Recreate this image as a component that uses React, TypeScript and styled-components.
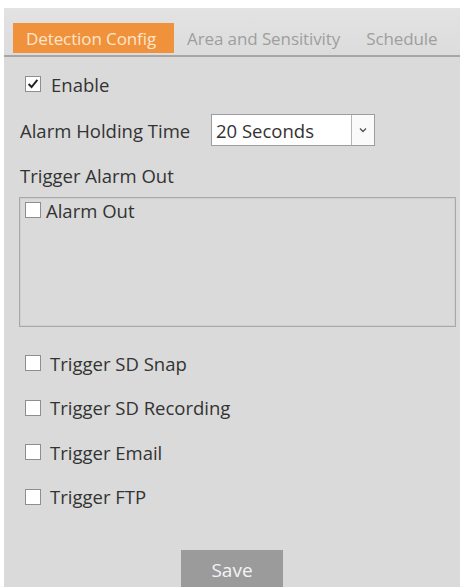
import React from "react";
import styled, { createGlobalStyle } from "styled-components";

const Global = createGlobalStyle`
  html, body { margin: 0; padding: 0; background: #ffffff; }
  body { font-family: "Open Sans", "Noto Sans", "Liberation Sans", sans-serif; color: #333333; }
  #root { width: 473px; height: 587px; overflow: hidden; }
`;

const Panel = styled.div`
  margin: 8px 0 0 4px;
  width: 456px;
  height: 600px;
  background: #dadada;
  box-sizing: border-box;
  display: flex;
  flex-direction: column;
`;

const TabBar = styled.div`
  display: flex;
  align-items: stretch;
  padding: 15px 0 0 9px;
  height: 47px;
  box-sizing: content-box;
  height: 32px;
  border-bottom: 2px solid #a6a6a6;
  background: linear-gradient(#e3e3e3, #dcdcdc);
`;

const Tab = styled.div<{ $active?: boolean }>`
  display: flex;
  align-items: center;
  padding: 0 13px;
  font-size: 17px;
  letter-spacing: -0.1px;
  white-space: nowrap;
  background: ${(p) => (p.$active ? "#f0913c" : "transparent")};
  color: ${(p) => (p.$active ? "#fde6cc" : "#9e9e9e")};
  width: ${(p) => (p.$active ? "161px" : "auto")};
  box-sizing: border-box;
  margin-bottom: 2px;
`;

const Content = styled.div`
  display: flex;
  flex-direction: column;
  padding: 0 4px 0 15px;
`;

const Row = styled.div<{ $mt: number; $h: number; $indent?: number }>`
  display: flex;
  align-items: center;
  margin-top: ${(p) => p.$mt}px;
  height: ${(p) => p.$h}px;
  padding-left: ${(p) => p.$indent ?? 0}px;
  font-size: 18.5px;
  color: #333333;
  white-space: nowrap;
`;

const Box = styled.span`
  width: 16px;
  height: 16px;
  box-sizing: border-box;
  border: 1px solid #8e8e8e;
  background: #ffffff;
  display: inline-flex;
  align-items: center;
  justify-content: center;
  flex: none;
`;

const CheckLabel = styled.span<{ $gap: number }>`
  margin-left: ${(p) => p.$gap}px;
`;

const FieldLabel = styled.span`
  width: 191px;
  flex: none;
`;

const Select = styled.div`
  width: 164px;
  height: 32px;
  box-sizing: border-box;
  border: 1px solid #9d9d9d;
  background: #ffffff;
  display: flex;
  align-items: stretch;
`;

const SelectText = styled.span`
  flex: 1;
  display: flex;
  align-items: center;
  padding-left: 4px;
  font-size: 18.5px;
  color: #333333;
`;

const SelectButton = styled.span`
  width: 22px;
  border-left: 1px solid #b5b5b5;
  display: flex;
  align-items: center;
  justify-content: center;
  background: #fafafa;
`;

const AlarmBox = styled.div`
  margin-top: 10px;
  width: 437px;
  height: 130px;
  box-sizing: border-box;
  border: 1px solid #a9a9a9;
  box-shadow: inset 0 0 0 1px #cfcfcf;
  padding: 4px 5px;
`;

const AlarmItem = styled.div`
  display: flex;
  align-items: center;
  height: 16px;
  font-size: 18.5px;
  color: #333333;
  white-space: nowrap;
`;

const SaveWrap = styled.div`
  display: flex;
  padding-left: 162px;
  margin-top: 31px;
`;

const SaveButton = styled.button`
  width: 102px;
  height: 40px;
  border: none;
  background: #9b9b9b;
  color: #f4f4f4;
  font-family: "Open Sans", "Noto Sans", sans-serif;
  font-size: 19px;
  padding: 0;
`;

const Check = ({ checked }: { checked?: boolean }) => (
  <Box>
    {checked && (
      <svg width="12" height="12" viewBox="0 0 11 11">
        <path d="M1.5 5.5 L4.2 8.3 L9.5 1.8" fill="none" stroke="#222" strokeWidth="1.8" />
      </svg>
    )}
  </Box>
);

const triggers = ["Trigger SD Snap", "Trigger SD Recording", "Trigger Email", "Trigger FTP"];

export default function App() {
  return (
    <>
      <Global />
      <Panel>
        <TabBar>
          <Tab $active>Detection Config</Tab>
          <Tab>Area and Sensitivity</Tab>
          <Tab>Schedule</Tab>
        </TabBar>
        <Content>
          <Row $mt={12} $h={30} $indent={6}>
            <Check checked />
            <CheckLabel $gap={10}>Enable</CheckLabel>
          </Row>
          <Row $mt={15} $h={32} $indent={1}>
            <FieldLabel>Alarm Holding Time</FieldLabel>
            <Select>
              <SelectText>20 Seconds</SelectText>
              <SelectButton>
                <svg width="8" height="6" viewBox="0 0 8 6">
                  <path d="M1 1.5 L4 4.5 L7 1.5" fill="none" stroke="#555" strokeWidth="1.4" />
                </svg>
              </SelectButton>
            </Select>
          </Row>
          <Row $mt={17} $h={24} $indent={1}>
            Trigger Alarm Out
          </Row>
          <AlarmBox>
            <AlarmItem>
              <Check />
              <CheckLabel $gap={5}>Alarm Out</CheckLabel>
            </AlarmItem>
          </AlarmBox>
          {triggers.map((t, i) => (
            <Row key={t} $mt={i === 0 ? 14 : 0} $h={44.5} $indent={6}>
              <Check />
              <CheckLabel $gap={9}>{t}</CheckLabel>
            </Row>
          ))}
          <SaveWrap>
            <SaveButton>Save</SaveButton>
          </SaveWrap>
        </Content>
      </Panel>
    </>
  );
}
